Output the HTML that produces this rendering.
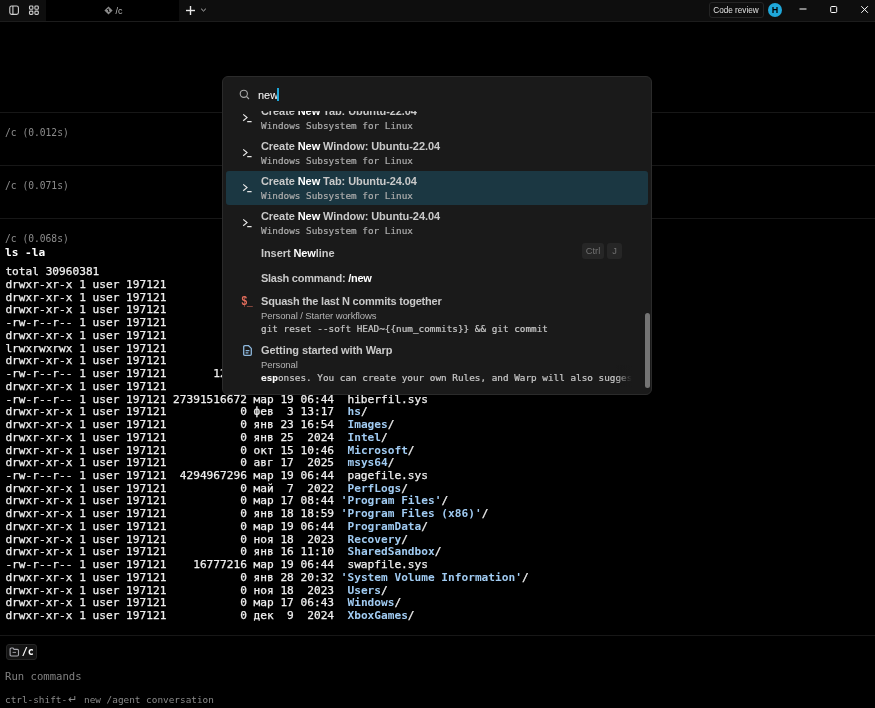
<!DOCTYPE html>
<html>
<head>
<meta charset="utf-8">
<title>Warp</title>
<style>
*{box-sizing:border-box;margin:0;padding:0}
html,body{width:875px;height:708px;overflow:hidden;background:#000;}
body{position:relative;font-family:"Liberation Sans",sans-serif;color:#fff;}
.mono{font-family:"DejaVu Sans Mono","Liberation Mono",monospace;}
.abs{position:absolute}
#titlebar{position:absolute;left:0;top:0;width:875px;height:22px;background:#0e0e0e;border-bottom:1px solid #1c1c1c;}
#tab{position:absolute;left:46px;top:0;width:133px;height:21px;background:#000;}
.tabtxt{position:absolute;left:115.5px;top:5px;font-size:9px;color:#b8b8b8;line-height:12px;}
.hline{position:absolute;left:0;width:875px;height:1px;background:#171717;}
.meta{position:absolute;left:5px;font-size:9.65px;line-height:13px;color:#8c8c8c;white-space:pre;}
.term{position:absolute;left:5.4px;top:279.0px;transform:translateY(-0.5px);-webkit-text-stroke:0.25px #f0f0f0;font-size:11.15px;line-height:12.74px;color:#f0f0f0;white-space:pre;}
.term b{color:#a0cbf2;font-weight:bold;-webkit-text-stroke:0;}
.cmd{position:absolute;left:5px;top:246px;font-size:11.15px;line-height:13px;color:#fff;font-weight:bold;white-space:pre;}
#palette{position:absolute;left:222px;top:76px;width:430px;height:319px;background:#1a1a1a;border:1px solid #2b2b2b;border-radius:6px;overflow:hidden;}
#list{position:absolute;left:0;top:33px;width:428px;height:277px;overflow:hidden;}
.item{position:absolute;left:3px;width:422px;height:35px;border-radius:3px;}
.item.sel{background:#1b3742;}
.t{position:absolute;left:38px;font-size:11px;letter-spacing:-0.08px;font-weight:bold;color:#c9c9c9;white-space:pre;line-height:13px;}
.t i{font-style:normal;color:#fff;}
.s{position:absolute;left:38px;font-size:9.36px;color:#adadad;-webkit-text-stroke:0.2px #adadad;white-space:pre;line-height:12px;}
.sub{position:absolute;left:38px;font-size:9.5px;letter-spacing:-0.1px;color:#b4b4b4;white-space:pre;line-height:12px;}
.key{position:absolute;height:15.6px;background:#262626;border-radius:3px;color:#727272;font-size:9.3px;line-height:17px;text-align:center;}
</style>
</head>
<body>
<div id="root" style="position:absolute;left:0;top:0;width:875px;height:708px;will-change:transform;">
<div id="titlebar">
  <div id="tab"></div>
  <!-- panel icon -->
  <svg class="abs" style="left:8px;top:4px" width="12" height="12" viewBox="0 0 12 12" fill="none" stroke="#d0d0d0" stroke-width="1.1"><rect x="1.8" y="2" width="8.6" height="8.4" rx="1.8"/><line x1="4.9" y1="2" x2="4.9" y2="10.4"/></svg>
  <!-- grid icon -->
  <svg class="abs" style="left:28px;top:4px" width="12" height="12" viewBox="0 0 12 12" fill="none" stroke="#d0d0d0" stroke-width="1.1"><rect x="1.5" y="2" width="3.4" height="3.3" rx="0.9"/><rect x="6.9" y="2" width="3.4" height="3.3" rx="0.9"/><rect x="1.5" y="7.1" width="3.4" height="3.3" rx="0.9"/><rect x="6.9" y="7.1" width="3.4" height="3.3" rx="0.9"/></svg>
  <!-- tab icon -->
  <svg class="abs" style="left:103.8px;top:5.8px" width="9" height="9" viewBox="0 0 9 9"><path d="M4.5 0.4 L8.6 4.5 L4.5 8.6 L0.4 4.5 Z" fill="#8a8a8a"/><path d="M3 3 L5.5 5.5 M4.6 2.6 L4.6 6" stroke="#000" stroke-width="0.8"/></svg>
  <div class="tabtxt">/c</div>
  <!-- plus -->
  <svg class="abs" style="left:185px;top:5px" width="11" height="11" viewBox="0 0 11 11" stroke="#e6e6e6" stroke-width="1.4"><line x1="5.5" y1="1" x2="5.5" y2="10"/><line x1="1" y1="5.5" x2="10" y2="5.5"/></svg>
  <svg class="abs" style="left:200px;top:7px" width="7" height="6" viewBox="0 0 7 6" fill="none" stroke="#bdbdbd" stroke-width="1"><path d="M1.2 1.8 L3.5 4 L5.8 1.8"/></svg>
  <!-- code review -->
  <div class="abs" style="left:708.5px;top:2px;width:55px;height:16px;border:1px solid #242424;border-radius:3px;font-size:8.2px;line-height:15.5px;text-align:center;color:#e0e0e0;">Code review</div>
  <div class="abs" style="left:768px;top:3px;width:14px;height:14px;border-radius:7px;background:#1fa7d9;color:#000;font-size:9px;font-weight:bold;line-height:14px;text-align:center;">H</div>
  <svg class="abs" style="left:798px;top:5px" width="10" height="10" viewBox="0 0 10 10" stroke="#fff" stroke-width="1"><line x1="1.5" y1="4" x2="8.5" y2="4"/></svg>
  <svg class="abs" style="left:828px;top:5px" width="10" height="10" viewBox="0 0 10 10" fill="none" stroke="#fff" stroke-width="1"><rect x="2.7" y="1.5" width="6" height="6" rx="1"/></svg>
  <svg class="abs" style="left:859px;top:5px" width="10" height="10" viewBox="0 0 10 10" stroke="#fff" stroke-width="1"><path d="M2.3 1.2 L8.9 7.8 M8.9 1.2 L2.3 7.8"/></svg>
</div>

<div class="hline" style="top:112px"></div>
<div class="meta mono" style="top:125.5px">/c (0.012s)</div>
<div class="hline" style="top:165px"></div>
<div class="meta mono" style="top:178.6px">/c (0.071s)</div>
<div class="hline" style="top:218px"></div>
<div class="meta mono" style="top:231.6px">/c (0.068s)</div>
<div class="cmd mono">ls -la</div>
<div class="term mono" style="top:266.2px">total 30960381</div>
<div class="term mono">drwxr-xr-x 1 user 197121
drwxr-xr-x 1 user 197121
drwxr-xr-x 1 user 197121
-rw-r--r-- 1 user 197121
drwxr-xr-x 1 user 197121
lrwxrwxrwx 1 user 197121
drwxr-xr-x 1 user 197121
-rw-r--r-- 1 user 197121       12288 мар 19 06:44  DumpStack.log.tmp
drwxr-xr-x 1 user 197121
-rw-r--r-- 1 user 197121 27391516672 мар 19 06:44  hiberfil.sys
drwxr-xr-x 1 user 197121           0 фев  3 13:17  <b>hs</b>/
drwxr-xr-x 1 user 197121           0 янв 23 16:54  <b>Images</b>/
drwxr-xr-x 1 user 197121           0 янв 25  2024  <b>Intel</b>/
drwxr-xr-x 1 user 197121           0 окт 15 10:46  <b>Microsoft</b>/
drwxr-xr-x 1 user 197121           0 авг 17  2025  <b>msys64</b>/
-rw-r--r-- 1 user 197121  4294967296 мар 19 06:44  pagefile.sys
drwxr-xr-x 1 user 197121           0 май  7  2022  <b>PerfLogs</b>/
drwxr-xr-x 1 user 197121           0 мар 17 08:44 <b>'Program Files'</b>/
drwxr-xr-x 1 user 197121           0 янв 18 18:59 <b>'Program Files (x86)'</b>/
drwxr-xr-x 1 user 197121           0 мар 19 06:44  <b>ProgramData</b>/
drwxr-xr-x 1 user 197121           0 ноя 18  2023  <b>Recovery</b>/
drwxr-xr-x 1 user 197121           0 янв 16 11:10  <b>SharedSandbox</b>/
-rw-r--r-- 1 user 197121    16777216 мар 19 06:44  swapfile.sys
drwxr-xr-x 1 user 197121           0 янв 28 20:32 <b>'System Volume Information'</b>/
drwxr-xr-x 1 user 197121           0 ноя 18  2023  <b>Users</b>/
drwxr-xr-x 1 user 197121           0 мар 17 06:43  <b>Windows</b>/
drwxr-xr-x 1 user 197121           0 дек  9  2024  <b>XboxGames</b>/</div>

<div class="hline" style="top:635px"></div>
<div class="abs" style="left:5.5px;top:644px;width:31.5px;height:16px;background:#131313;border:1px solid #252525;border-radius:3px;"></div>
<svg class="abs" style="left:8.5px;top:647px" width="11" height="10" viewBox="0 0 11 10" fill="none" stroke="#a9a9b0" stroke-width="1.1"><path d="M1.1 2.2 Q1.1 1 2.3 1 H4 L5 2.4 H8.3 Q9.5 2.4 9.5 3.6 V7.8 Q9.5 9 8.3 9 H2.3 Q1.1 9 1.1 7.8 Z"/><path d="M3.6 5.4 H7" stroke-width="0.9"/></svg>
<div class="abs mono" style="left:21.8px;top:645.2px;font-size:10px;line-height:13px;font-weight:bold;color:#fff;">/c</div>
<div class="abs mono" style="left:5px;top:670px;font-size:10.6px;line-height:13px;color:#808080;">Run commands</div>
<div class="abs mono" style="left:5px;top:693.5px;font-size:9.4px;line-height:12px;color:#8a8a8a;white-space:pre;">ctrl-shift-<span style="display:inline-block;width:11.3px;text-align:center;font-family:'DejaVu Sans',sans-serif;font-size:11px;line-height:10px;">↵</span> new /agent conversation</div>

<div id="palette">
  <svg class="abs" style="left:15.7px;top:12px" width="11" height="11" viewBox="0 0 11 11" fill="none" stroke="#a8a8a8" stroke-width="1.1"><circle cx="4.8" cy="4.8" r="3.6"/><line x1="7.5" y1="7.5" x2="10" y2="10"/></svg>
  <div class="abs" style="left:35px;top:11.5px;font-size:11px;line-height:13px;color:#fff;">new</div>
  <div class="abs" style="left:53.5px;top:11px;width:2px;height:13px;background:#1fa7d9;"></div>
  <div id="list">
    <div class="item sel" style="top:60.5px;height:34.5px"></div>
    <svg class="abs term-ic" style="left:19px;top:3px" width="11" height="10" viewBox="0 0 11 10" fill="none" stroke="#e6e6e6" stroke-width="1.2"><path d="M1.2 1.4 L5 4.6 L1.2 7.8 M5.2 8.6 H9.6"/></svg>
    <svg class="abs term-ic" style="left:19px;top:38px" width="11" height="10" viewBox="0 0 11 10" fill="none" stroke="#e6e6e6" stroke-width="1.2"><path d="M1.2 1.4 L5 4.6 L1.2 7.8 M5.2 8.6 H9.6"/></svg>
    <svg class="abs term-ic" style="left:19px;top:73px" width="11" height="10" viewBox="0 0 11 10" fill="none" stroke="#e6e6e6" stroke-width="1.2"><path d="M1.2 1.4 L5 4.6 L1.2 7.8 M5.2 8.6 H9.6"/></svg>
    <svg class="abs term-ic" style="left:19px;top:108px" width="11" height="10" viewBox="0 0 11 10" fill="none" stroke="#e6e6e6" stroke-width="1.2"><path d="M1.2 1.4 L5 4.6 L1.2 7.8 M5.2 8.6 H9.6"/></svg>
    <div class="t" style="top:-5.5px">Create <i>New</i> Tab: Ubuntu-22.04</div>
    <div class="s mono" style="top:9.7px">Windows Subsystem for Linux</div>
    <div class="t" style="top:29.5px">Create <i>New</i> Window: Ubuntu-22.04</div>
    <div class="s mono" style="top:44.7px">Windows Subsystem for Linux</div>
    <div class="t" style="top:64.5px">Create <i>New</i> Tab: Ubuntu-24.04</div>
    <div class="s mono" style="top:79.7px">Windows Subsystem for Linux</div>
    <div class="t" style="top:99.5px">Create <i>New</i> Window: Ubuntu-24.04</div>
    <div class="s mono" style="top:114.7px">Windows Subsystem for Linux</div>
    <div class="t" style="top:136.5px">Insert <i>New</i>line</div>
    <div class="key" style="left:359px;top:133px;width:22px">Ctrl</div>
    <div class="key" style="left:384px;top:133px;width:15px">J</div>
    <div class="t" style="top:161.5px;letter-spacing:-0.26px">Slash command: <i>/new</i></div>
    <svg class="abs" style="left:17px;top:184px" width="14" height="14" viewBox="0 0 14 14"><text x="1.4" y="11.4" font-family="Liberation Sans, sans-serif" font-weight="bold" font-size="12" fill="#e26d5c" textLength="11.4" lengthAdjust="spacingAndGlyphs">$_</text></svg>
    <div class="t" style="top:184.5px;letter-spacing:-0.21px">Squash the last N commits together</div>
    <div class="sub" style="top:200.3px">Personal / Starter workflows</div>
    <div class="s mono" style="top:213.3px;color:#c8c8c8;-webkit-text-stroke:0.2px #c8c8c8">git reset --soft HEAD~{{num_commits}} &amp;&amp; git commit</div>
    <svg class="abs" style="left:20px;top:235px" width="9" height="11" viewBox="0 0 9 11" fill="none" stroke="#8db7dc" stroke-width="1.3"><path d="M1.8 0.7 H5.6 L8.3 3.4 V9.2 Q8.3 10.3 7.2 10.3 H1.8 Q0.7 10.3 0.7 9.2 V1.8 Q0.7 0.7 1.8 0.7 Z M2.6 5.6 H6.4 M2.6 7.8 H5.4"/></svg>
    <div class="t" style="top:233.5px">Getting started with Warp</div>
    <div class="sub" style="top:249px">Personal</div>
    <div class="s mono" style="top:262px;color:#c8c8c8;-webkit-text-stroke:0.2px #c8c8c8"><span style="color:#fff;font-weight:bold">esp</span>onses. You can create your own Rules, and Warp will also sugges</div>
    <div class="abs" style="left:393px;top:255px;width:35px;height:22px;background:linear-gradient(to right,rgba(26,26,26,0),#1a1a1a 45%);"></div>
  </div>
  <div class="abs" style="left:0;top:33px;width:428px;height:1.3px;background:#1a1a1a;"></div>
  <div class="abs" style="left:421.6px;top:235.5px;width:5.4px;height:75.5px;border-radius:2.7px;background:#747474;"></div>
</div>
</div>
</body>
</html>
